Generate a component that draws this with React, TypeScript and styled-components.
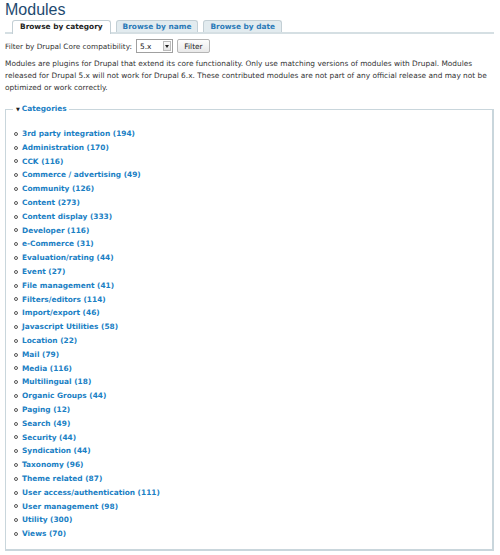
import React from "react";
import styled, { createGlobalStyle } from "styled-components";

const GlobalStyle = createGlobalStyle`
  body {
    margin: 0;
    background: #ffffff;
    font-family: "DejaVu Sans", Verdana, sans-serif;
    color: #333333;
  }
`;

const Page = styled.div`
  width: 500px;
  padding: 0 6px 0 5px;
  box-sizing: border-box;
`;

const Title = styled.h1`
  margin: 0;
  font-family: "Liberation Sans", Arial, sans-serif;
  font-weight: normal;
  font-size: 16px;
  line-height: 20px;
  color: #1e4a70;
`;

const TabBar = styled.ul`
  display: flex;
  gap: 5px;
  margin: 0;
  padding: 0 0 0 7px;
  list-style: none;
  border-bottom: 2px solid #d5dfe3;
  height: 12px;
`;

const Tab = styled.li<{ $active?: boolean }>`
  height: ${(p) => (p.$active ? "14px" : "12px")};
  padding: 0 ${(p) => (p.$active ? "7px" : "6px")};
  box-sizing: border-box;
  border: 1px solid #c3cfd5;
  border-bottom: none;
  border-radius: 3px 3px 0 0;
  background: ${(p) => (p.$active ? "#ffffff" : "#e2ebef")};
  color: ${(p) => (p.$active ? "#222222" : "#2a7ab8")};
  font-size: 7.4px;
  font-weight: bold;
  line-height: 11px;
  white-space: nowrap;
`;

const FilterRow = styled.form`
  display: flex;
  align-items: center;
  gap: 4px;
  margin-top: 5px;
  height: 14px;
  font-size: 7.3px;
  color: #333;
`;

const SelectBox = styled.span`
  position: relative;
  display: inline-flex;
  width: 37px;
  height: 14px;
`;

const Select = styled.select`
  appearance: none;
  width: 100%;
  height: 100%;
  font-size: 7.4px;
  padding: 0 0 0 3px;
  border: 1px solid #a0a0a0;
  border-radius: 0;
  background: #fff;
  color: #222;
  font-family: "DejaVu Sans", Verdana, sans-serif;
`;

const SelectArrow = styled.span`
  position: absolute;
  right: 2px;
  top: 2px;
  width: 8px;
  height: 10px;
  box-sizing: border-box;
  border: 1px solid #bbb;
  background: linear-gradient(#fafafa, #e4e4e4);
  pointer-events: none;

  &::after {
    content: "";
    position: absolute;
    left: 1px;
    top: 3px;
    border-left: 2.5px solid transparent;
    border-right: 2.5px solid transparent;
    border-top: 3px solid #222;
  }
`;

const Button = styled.button`
  width: 33px;
  height: 14px;
  padding: 0;
  font-size: 7.4px;
  font-family: "DejaVu Sans", Verdana, sans-serif;
  background: linear-gradient(#fdfdfd, #e9e9e9);
  border: 1px solid #b5b5b5;
  border-radius: 2px;
  color: #222;
`;

const Intro = styled.p`
  margin: 5px 0 0;
  max-width: 482px;
  font-size: 7.4px;
  line-height: 12px;
  color: #333;
`;

const Fieldset = styled.fieldset`
  margin: 10px 0 0;
  padding: 13px 0 8px 0;
  border: solid #c9d6dc;
  border-width: 1px 2px 2px 1px;
`;

const Legend = styled.legend`
  padding: 0 2px 0 3px;
  margin-left: 7px;
  font-size: 7.4px;
  line-height: 10px;
  font-weight: bold;
  display: flex;
  align-items: center;
  gap: 2px;
`;

const Arrow = styled.span`
  font-size: 5px;
  color: #222;
`;

const List = styled.ul`
  margin: 0;
  padding: 0 0 0 8px;
  list-style: none;
`;

const Item = styled.li`
  display: flex;
  align-items: center;
  gap: 4px;
  font-size: 7.4px;
  line-height: 13.8px;
  font-weight: bold;

  &::before {
    content: "";
    width: 2px;
    height: 2px;
    border: 1px solid #555;
    border-radius: 50%;
    flex: none;
  }
`;

const Link = styled.a`
  color: #1a80c4;
  text-decoration: none;
`;

const categories: [string, number][] = [
  ["3rd party integration", 194],
  ["Administration", 170],
  ["CCK", 116],
  ["Commerce / advertising", 49],
  ["Community", 126],
  ["Content", 273],
  ["Content display", 333],
  ["Developer", 116],
  ["e-Commerce", 31],
  ["Evaluation/rating", 44],
  ["Event", 27],
  ["File management", 41],
  ["Filters/editors", 114],
  ["Import/export", 46],
  ["Javascript Utilities", 58],
  ["Location", 22],
  ["Mail", 79],
  ["Media", 116],
  ["Multilingual", 18],
  ["Organic Groups", 44],
  ["Paging", 12],
  ["Search", 49],
  ["Security", 44],
  ["Syndication", 44],
  ["Taxonomy", 96],
  ["Theme related", 87],
  ["User access/authentication", 111],
  ["User management", 98],
  ["Utility", 300],
  ["Views", 70],
];

export default function App() {
  return (
    <Page>
      <GlobalStyle />
      <Title>Modules</Title>
      <TabBar>
        <Tab $active>Browse by category</Tab>
        <Tab>Browse by name</Tab>
        <Tab>Browse by date</Tab>
      </TabBar>
      <FilterRow onSubmit={(e) => e.preventDefault()}>
        <span>Filter by Drupal Core compatibility:</span>
        <SelectBox>
          <Select defaultValue="5.x">
            <option>5.x</option>
            <option>6.x</option>
          </Select>
          <SelectArrow />
        </SelectBox>
        <Button type="submit">Filter</Button>
      </FilterRow>
      <Intro>
        Modules are plugins for Drupal that extend its core functionality. Only use
        matching versions of modules with Drupal. Modules released for Drupal 5.x will
        not work for Drupal 6.x. These contributed modules are not part of any official
        release and may not be optimized or work correctly.
      </Intro>
      <Fieldset>
        <Legend>
          <Arrow>▼</Arrow>
          <Link href="#">Categories</Link>
        </Legend>
        <List>
          {categories.map(([name, count]) => (
            <Item key={name}>
              <Link href="#">
                {name} ({count})
              </Link>
            </Item>
          ))}
        </List>
      </Fieldset>
    </Page>
  );
}
